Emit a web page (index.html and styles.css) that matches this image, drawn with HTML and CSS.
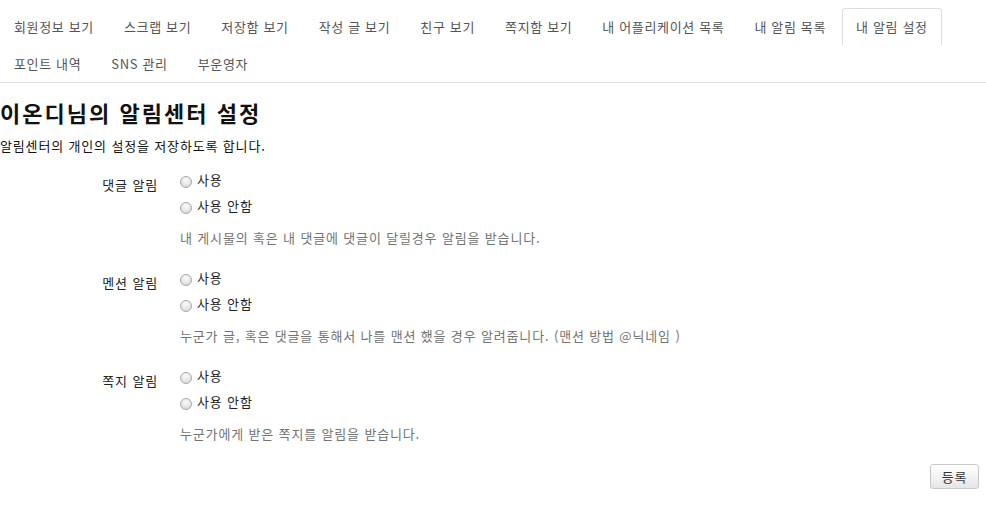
FILE: index.html
```html
<!DOCTYPE html>
<html lang="ko">
<head>
<meta charset="utf-8">
<title>알림센터 설정</title>
<link rel="stylesheet" href="styles.css">
</head>
<body>
<ul class="tabs">
  <li><a class="tab" href="#">회원정보 보기</a></li>
  <li><a class="tab" href="#">스크랩 보기</a></li>
  <li><a class="tab" href="#">저장함 보기</a></li>
  <li><a class="tab" href="#">작성 글 보기</a></li>
  <li><a class="tab" href="#">친구 보기</a></li>
  <li><a class="tab" href="#">쪽지함 보기</a></li>
  <li><a class="tab" href="#">내 어플리케이션 목록</a></li>
  <li><a class="tab" href="#">내 알림 목록</a></li>
  <li><a class="tab active" href="#">내 알림 설정</a></li>
  <li class="break"></li>
  <li><a class="tab" href="#">포인트 내역</a></li>
  <li><a class="tab" href="#">SNS 관리</a></li>
  <li><a class="tab" href="#">부운영자</a></li>
</ul>

<h2 class="title">이온디님의 알림센터 설정</h2>
<p class="lead">알림센터의 개인의 설정을 저장하도록 합니다.</p>

<form class="form">
  <div class="group">
    <div class="label">댓글 알림</div>
    <div class="controls">
      <label class="radio"><input type="radio" name="comment"><span>사용</span></label>
      <label class="radio"><input type="radio" name="comment"><span>사용 안함</span></label>
      <p class="help">내 게시물의 혹은 내 댓글에 댓글이 달릴경우 알림을 받습니다.</p>
    </div>
  </div>
  <div class="group">
    <div class="label">멘션 알림</div>
    <div class="controls">
      <label class="radio"><input type="radio" name="mention"><span>사용</span></label>
      <label class="radio"><input type="radio" name="mention"><span>사용 안함</span></label>
      <p class="help">누군가 글, 혹은 댓글을 통해서 나를 맨션 했을 경우 알려줍니다. (맨션 방법 @닉네임 )</p>
    </div>
  </div>
  <div class="group">
    <div class="label">쪽지 알림</div>
    <div class="controls">
      <label class="radio"><input type="radio" name="note"><span>사용</span></label>
      <label class="radio"><input type="radio" name="note"><span>사용 안함</span></label>
      <p class="help">누군가에게 받은 쪽지를 알림을 받습니다.</p>
    </div>
  </div>
  <div class="actions">
    <button type="button" class="btn">등록</button>
  </div>
</form>
</body>
</html>
```

FILE: styles.css
```css
html, body {
  margin: 0;
  padding: 0;
  background: #fff;
}

body {
  font-family: "Noto Sans CJK KR", "Noto Sans", "Liberation Sans", sans-serif;
  font-size: 13px;
  line-height: 20px;
  letter-spacing: 0.065em;
  color: #222;
}

.tabs {
  list-style: none;
  margin: 0;
  padding: 8px 0 0 0;
  display: flex;
  flex-wrap: wrap;
  border-bottom: 1px solid #dddddd;
}

.tabs li {
  display: block;
}

.tabs .break {
  flex-basis: 100%;
  height: 0;
}

.tab {
  display: block;
  padding: 10px 13px 10px 13px;
  margin-right: 2px;
  line-height: 16px;
  letter-spacing: 0.05em;
  border: 1px solid transparent;
  border-bottom: 0;
  border-radius: 4px 4px 0 0;
  color: #555;
  text-decoration: none;
  white-space: nowrap;
}

.tab.active {
  border-color: #dddddd;
  background: #fff;
}

.title {
  margin: 14px 0 0 0;
  font-size: 22px;
  line-height: 30px;
  letter-spacing: 0.092em;
  font-weight: bold;
  color: #111;
}

.lead {
  margin: 9px 0 0 0;
  color: #111;
}

.form {
  margin-top: 12px;
}

.group {
  display: flex;
}

.label {
  width: 158px;
  padding-right: 22px;
  text-align: right;
  padding-top: 7px;
  color: #222;
}

.controls {
  flex: 1;
}

.radio {
  display: flex;
  align-items: center;
  height: 26px;
}

.radio input {
  -webkit-appearance: none;
  appearance: none;
  width: 12px;
  height: 12px;
  margin: 0 5px 0 0;
  border-radius: 50%;
  border: 1px solid #a9a9a9;
  background: radial-gradient(circle at 50% 30%, #fafafa 0%, #e6e6e6 55%, #cfcfcf 100%);
  box-sizing: border-box;
  flex: none;
  position: relative;
  top: 1px;
}

.radio span {
  position: relative;
  top: -1px;
}

.help {
  margin: 8px 0 18px 0;
  color: #737373;
}

.actions {
  display: flex;
  justify-content: flex-end;
  padding-right: 7px;
  margin-top: 2px;
}

.btn {
  font-family: inherit;
  font-size: 13px;
  letter-spacing: 0.065em;
  width: 49px;
  height: 25px;
  padding: 0;
  border: 1px solid #c8c8c8;
  border-radius: 3px;
  background: linear-gradient(#ffffff, #e6e6e6);
  color: #333;
  box-shadow: 0 1px 1px rgba(0,0,0,0.05);
}
```
